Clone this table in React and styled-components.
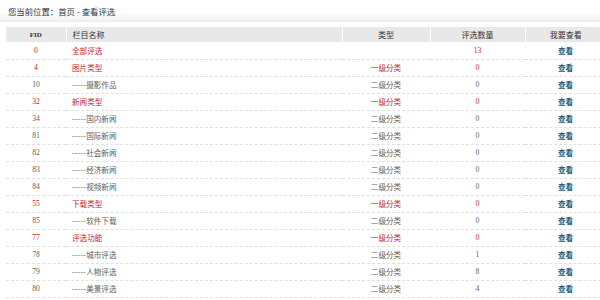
import React from 'react';
import styled, { createGlobalStyle } from 'styled-components';

const GlobalStyle = createGlobalStyle`
  html, body {
    margin: 0;
    padding: 0;
    background: #fff;
    overflow: hidden;
  }
  body {
    font-family: "Liberation Serif", "Noto Sans CJK SC", serif;
    color: #555;
  }
`;

const Page = styled.div`
  width: 600px;
  height: 300px;
  overflow: hidden;
`;

const Breadcrumb = styled.div`
  height: 21px;
  padding-left: 8px;
  display: flex;
  align-items: center;
  font-family: "Noto Sans CJK SC", sans-serif;
  font-size: 8.4px;
  color: #333;
  background: linear-gradient(#fff 0%, #fff 55%, #f1f1f1 100%);
  border-bottom: 1px solid #ececec;
`;

const Table = styled.table`
  margin: 5px 0 0 6px;
  width: 600px;
  border-collapse: collapse;
  table-layout: fixed;
  font-size: 7.6px;
`;

const Head = styled.th`
  height: 15px;
  padding: 0;
  background: #e8e8e8;
  border-left: 1px solid #fff;
  color: #333;
  font-weight: ${p => (p.$latin ? 'bold' : 'normal')};
  font-size: ${p => (p.$latin ? '7px' : '8px')};
  text-align: ${p => (p.$left ? 'left' : 'center')};
  padding-left: ${p => (p.$left ? '6px' : '0')};
  &:first-child {
    border-left: none;
  }
`;

const Row = styled.tr`
  height: 17px;
  border-bottom: 1px dashed #e0e0e0;
  color: ${p => (p.$top ? '#c0282d' : '#606060')};
`;

const Cell = styled.td`
  padding: 0;
  text-align: ${p => (p.$left ? 'left' : 'center')};
  padding-left: ${p => (p.$left ? '6px' : '0')};
  white-space: nowrap;
`;

const Dashes = styled.span`
  color: #777;
  letter-spacing: 0.3px;
`;

const ViewLink = styled.a`
  color: #2b5876;
  font-weight: bold;
  text-decoration: none;
  cursor: pointer;
`;

const rows = [
  { fid: 0, name: '全部评选', type: '', count: 13, top: true },
  { fid: 4, name: '图片类型', type: '一级分类', count: 0, top: true },
  { fid: 10, name: '摄影作品', type: '二级分类', count: 0 },
  { fid: 32, name: '新闻类型', type: '一级分类', count: 0, top: true },
  { fid: 34, name: '国内新闻', type: '二级分类', count: 0 },
  { fid: 81, name: '国际新闻', type: '二级分类', count: 0 },
  { fid: 82, name: '社会新闻', type: '二级分类', count: 0 },
  { fid: 83, name: '经济新闻', type: '二级分类', count: 0 },
  { fid: 84, name: '视频新闻', type: '二级分类', count: 0 },
  { fid: 55, name: '下载类型', type: '一级分类', count: 0, top: true },
  { fid: 85, name: '软件下载', type: '二级分类', count: 0 },
  { fid: 77, name: '评选功能', type: '一级分类', count: 0, top: true },
  { fid: 78, name: '城市评选', type: '二级分类', count: 1 },
  { fid: 79, name: '人物评选', type: '二级分类', count: 8 },
  { fid: 80, name: '美景评选', type: '二级分类', count: 4 },
];

function App() {
  return (
    <Page>
      <GlobalStyle />
      <Breadcrumb>您当前位置：首页 - 查看评选</Breadcrumb>
      <Table>
        <colgroup>
          <col style={{ width: 60 }} />
          <col style={{ width: 276 }} />
          <col style={{ width: 88 }} />
          <col style={{ width: 95 }} />
          <col style={{ width: 81 }} />
        </colgroup>
        <thead>
          <tr>
            <Head $latin>FID</Head>
            <Head $left>栏目名称</Head>
            <Head>类型</Head>
            <Head>评选数量</Head>
            <Head>我要查看</Head>
          </tr>
        </thead>
        <tbody>
          {rows.map(r => (
            <Row key={r.fid} $top={r.top}>
              <Cell>{r.fid}</Cell>
              <Cell $left>
                {!r.top && <Dashes>-----</Dashes>}
                {r.name}
              </Cell>
              <Cell>{r.type}</Cell>
              <Cell>{r.count}</Cell>
              <Cell>
                <ViewLink>查看</ViewLink>
              </Cell>
            </Row>
          ))}
        </tbody>
      </Table>
    </Page>
  );
}

export default App;
